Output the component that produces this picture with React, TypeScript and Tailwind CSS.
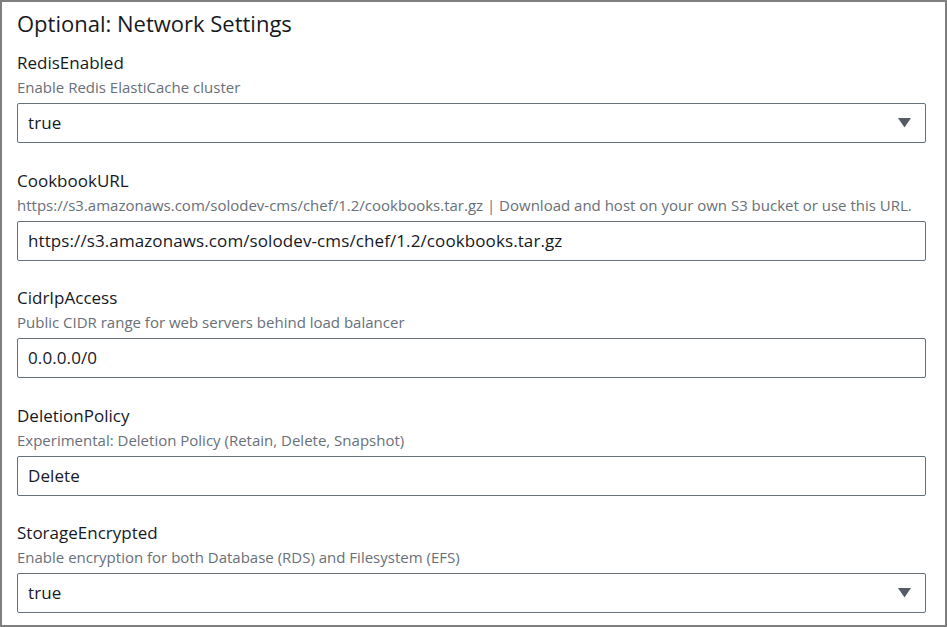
import React from 'react';

type Field = {
  name: string;
  description: string;
  value: string;
  select?: boolean;
};

const fields: Field[] = [
  { name: 'RedisEnabled', description: 'Enable Redis ElastiCache cluster', value: 'true', select: true },
  {
    name: 'CookbookURL',
    description:
      'https://s3.amazonaws.com/solodev-cms/chef/1.2/cookbooks.tar.gz | Download and host on your own S3 bucket or use this URL.',
    value: 'https://s3.amazonaws.com/solodev-cms/chef/1.2/cookbooks.tar.gz',
  },
  { name: 'CidrIpAccess', description: 'Public CIDR range for web servers behind load balancer', value: '0.0.0.0/0' },
  { name: 'DeletionPolicy', description: 'Experimental: Deletion Policy (Retain, Delete, Snapshot)', value: 'Delete' },
  {
    name: 'StorageEncrypted',
    description: 'Enable encryption for both Database (RDS) and Filesystem (EFS)',
    value: 'true',
    select: true,
  },
];

function CaretDown() {
  return (
    <svg width="13" height="10" viewBox="0 0 13 10" className="shrink-0">
      <polygon points="0,0 13,0 6.5,9.5" fill="#545b64" />
    </svg>
  );
}

function ParamField({ field, last }: { field: Field; last: boolean }) {
  return (
    <div className="flex flex-col">
      <label className="text-[17px] leading-[22px] text-[#16191f]">{field.name}</label>
      <p className="mt-[3px] text-[15px] leading-[20px] text-[#687078] whitespace-nowrap">{field.description}</p>
      <div className="mt-[6px] flex h-[40px] items-center justify-between rounded-[2px] border border-[#687078] bg-white pl-[10px] pr-[14px]">
        <span className="text-[17px] tracking-[0.1px] text-[#16191f]">{field.value}</span>
        {field.select && <CaretDown />}
      </div>
      {!last && <div className="h-[26px]" />}
    </div>
  );
}

export default function App() {
  return (
    <div
      className="h-[627px] w-[947px] border-2 border-[#7f7f7f] bg-white pl-[15px] pr-[19px] pt-[6px]"
      style={{ fontFamily: '"Open Sans", sans-serif' }}
    >
      <h2 className="text-[22px] leading-[30px] text-[#16191f]">Optional: Network Settings</h2>
      <div className="mt-[14px] flex flex-col">
        {fields.map((f, i) => (
          <div key={f.name} className={i % 2 === 0 ? 'pb-[1px]' : ''}>
            <ParamField field={f} last={i === fields.length - 1} />
          </div>
        ))}
      </div>
    </div>
  );
}
